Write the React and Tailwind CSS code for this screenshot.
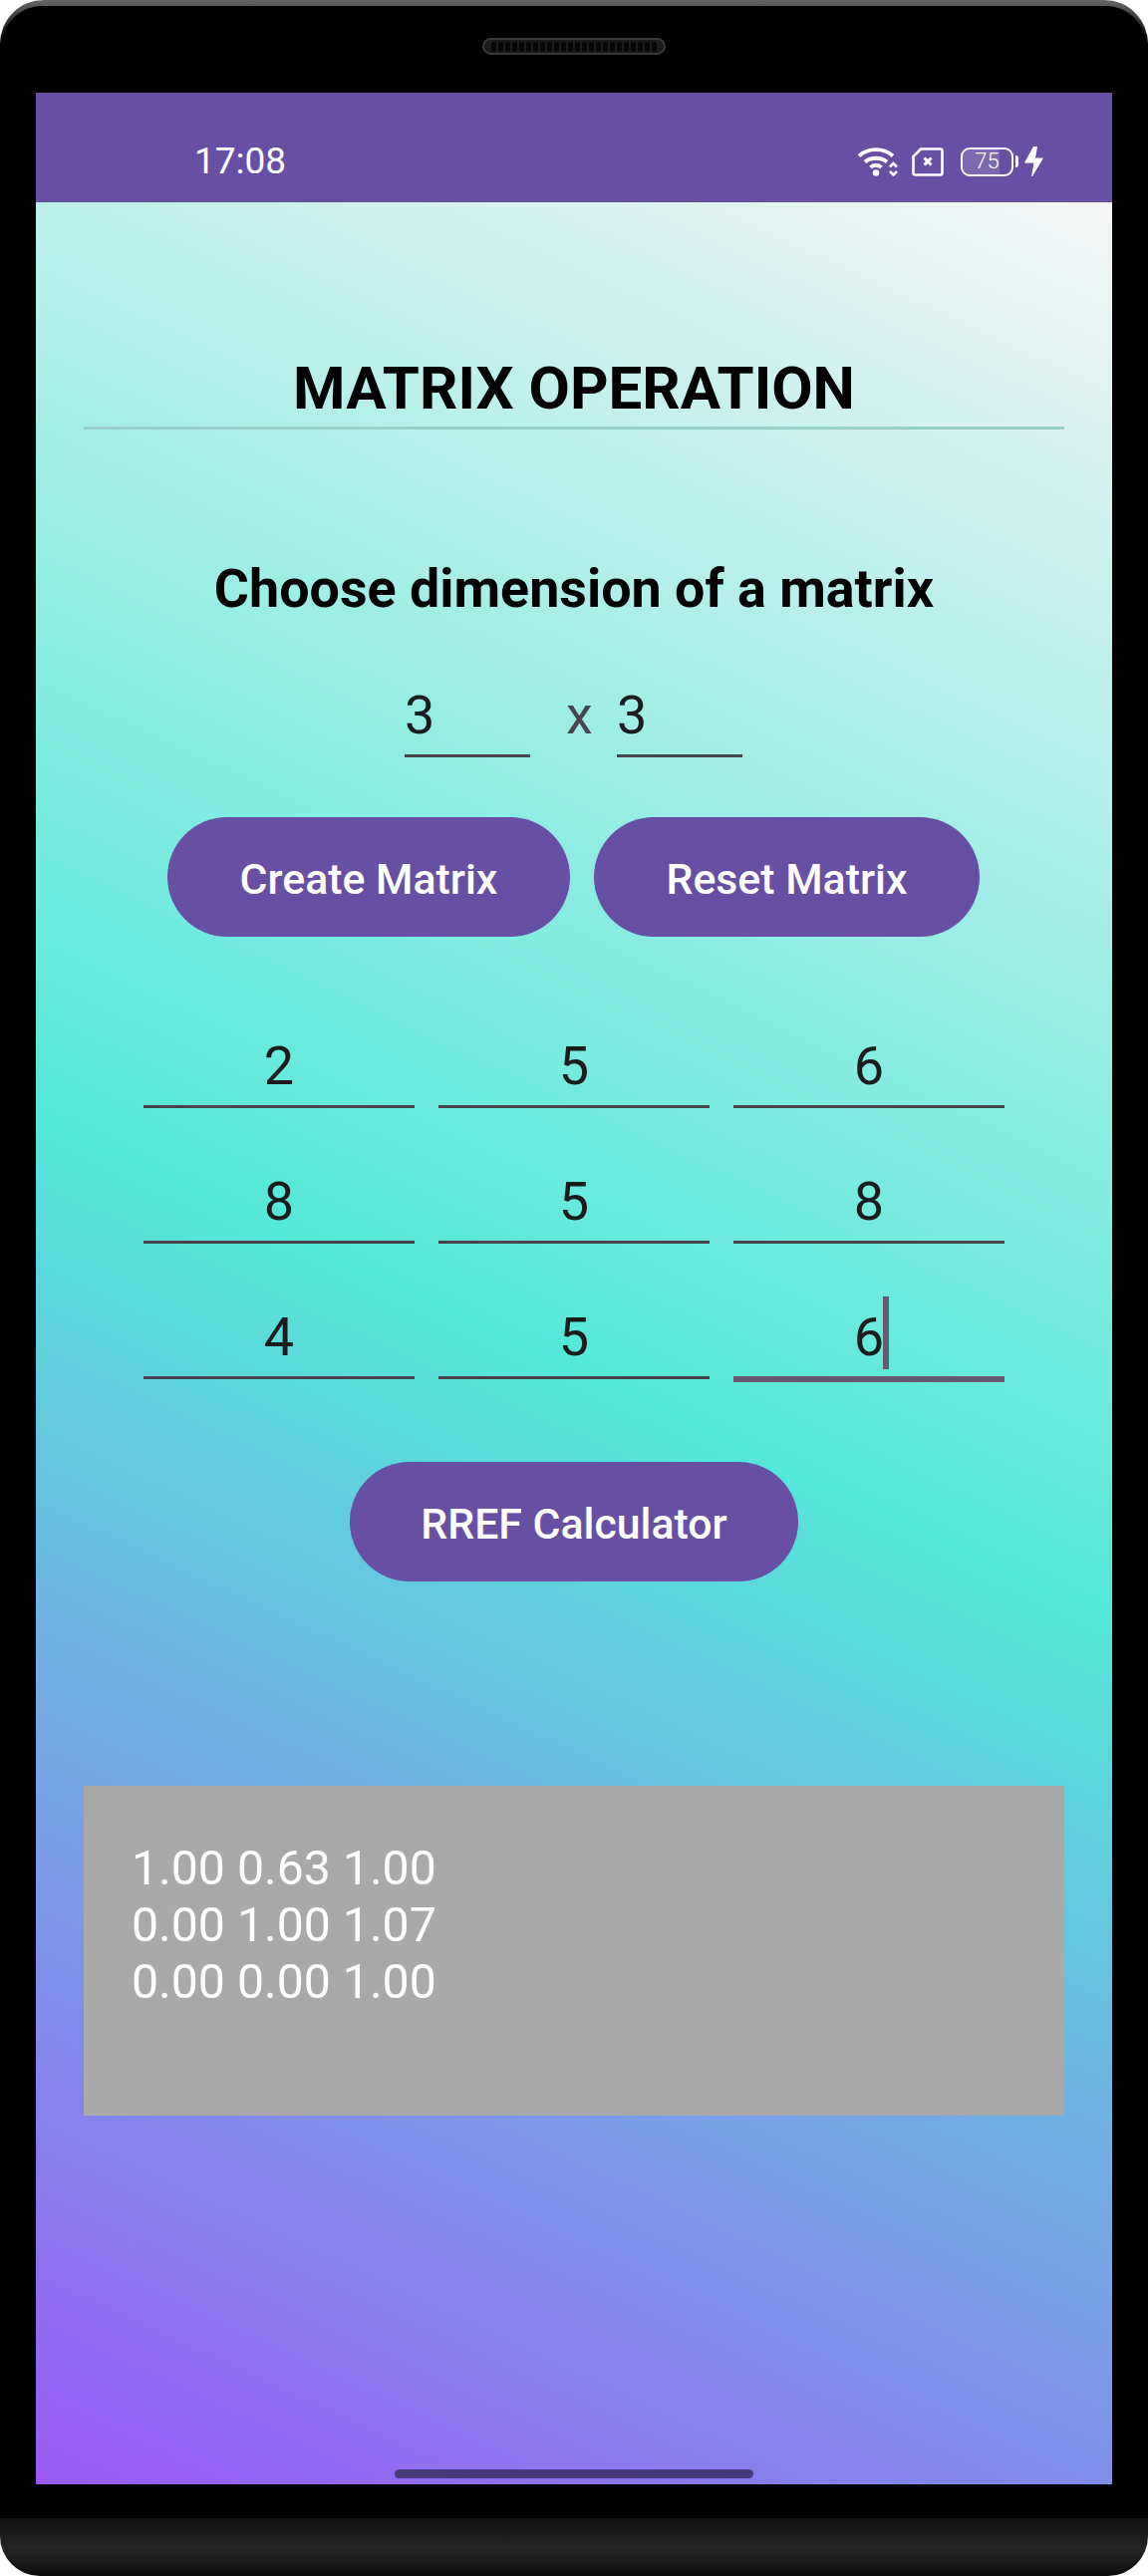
import React from 'react';

const font = { fontFamily: 'Roboto, sans-serif' };

const matrix = [
  ['2', '5', '6'],
  ['8', '5', '8'],
  ['4', '5', '6'],
];

const rref = ['1.00 0.63 1.00', '0.00 1.00 1.07', '0.00 0.00 1.00'];

const Speaker = () => (
  <div className="flex h-[17px] w-[184px] items-center justify-center gap-[2px] rounded-full border-2 border-[#3a3a3a] bg-[#1b1b1b]">
    {Array.from({ length: 24 }).map((_, i) => (
      <span key={i} className="h-[10px] w-[5px] rounded-full bg-[#050505]" />
    ))}
  </div>
);

const StatusIcons = () => (
  <div className="flex items-center">
    {/* wifi with up/down arrows */}
    <svg width="40" height="30" viewBox="0 0 40 30" fill="none" className="text-white">
      <path d="M1 9.500C10 1 26 1 35 9.500" stroke="currentColor" strokeWidth="3.8" />
      <path d="M7 15.500C12.500 10.500 23.500 10.500 29 15.500" stroke="currentColor" strokeWidth="3.8" />
      <path d="M12.500 21C15.500 18 20.500 18 23.500 21" stroke="currentColor" strokeWidth="3.8" />
      <circle cx="18" cy="26.500" r="3.200" fill="currentColor" />
      <path d="M32 20.500l3.500-3.500 3.500 3.500M32 25l3.500 3.500 3.500-3.500" stroke="currentColor" strokeWidth="2.600" />
    </svg>
    {/* sim card, no service */}
    <svg width="32" height="29" viewBox="0 0 32 29" fill="none" className="ml-[14px]">
      <path d="M9 1.500H28.500a2 2 0 0 1 2 2V25.500a2 2 0 0 1-2 2H3.500a2 2 0 0 1-2-2V9z" stroke="white" strokeWidth="2.600" />
      <path d="M12.500 10.500l7 7M19.500 10.500l-7 7" stroke="white" strokeWidth="3" />
    </svg>
    {/* battery */}
    <div className="relative ml-[17px] flex h-[29px] w-[53px] items-center justify-center overflow-hidden rounded-[9px] border-[2.5px] border-white">
      <div className="absolute inset-y-0 left-0 w-[37px] bg-white/15" />
      <span className="relative text-[22px] font-light leading-none text-white" style={font}>75</span>
    </div>
    <div className="ml-[2px] h-[12px] w-[3px] rounded-r-sm bg-white" />
    {/* charging bolt */}
    <svg width="19" height="30" viewBox="0 0 19 30" className="ml-[6px]">
      <path d="M9 0H13L11 11.500H19L8 30H7L9.500 16.500H0z" fill="white" />
    </svg>
  </div>
);

const PillButton = ({ className, children }) => (
  <button
    className={`flex h-[120px] items-center justify-center rounded-full bg-[#674fa3] pt-[4px] text-[42.800px] font-medium text-white ${className}`}
  >
    {children}
  </button>
);

const DimInput = ({ value }) => (
  <div className="h-[80px] w-[126px] border-b-[3px] border-[#47444d] text-[54px] leading-[75px] text-[#1c1b1f]">
    {value}
  </div>
);

const Cell = ({ value, focused }) => (
  <div
    className={`flex w-[272px] items-center justify-center pb-[3px] text-[54px] text-[#1c1b1f] ${
      focused ? 'h-[83px] border-b-[6px] border-[#655a70]' : 'h-[80px] border-b-[3px] border-[#47444d]'
    }`}
  >
    <span className="relative">
      {value}
      {focused && <span className="absolute top-0 left-[calc(100%-1px)] h-[73px] w-[6px] bg-[#655a70]" />}
    </span>
  </div>
);

const App = () => {
  return (
    <div className="h-[2585px] w-[1152px] overflow-hidden bg-white" style={font}>
      {/* top bezel */}
      <div className="h-[93px] rounded-t-[44px] bg-[linear-gradient(#666666,#000000_42px)] px-[2px] pt-[6px]">
        <div className="flex h-[87px] justify-center rounded-t-[40px] bg-black pt-[32px]">
          <Speaker />
        </div>
      </div>

      <div className="bg-black px-[36px] pb-[34px]">
        {/* screen */}
        <div className="flex h-[2400px] flex-col">
          <div className="flex h-[110px] items-center justify-between bg-[#674fa3] pl-[159px] pr-[69px] pt-[28px]">
            <span className="text-[37px] text-white">17:08</span>
            <StatusIcons />
          </div>

          <div className="relative flex flex-1 flex-col items-center bg-[linear-gradient(25deg,#9a5af5_0%,#54e8d8_49.200%,#f5f5f5_100%)] px-[48px]">
            <h1 className="mt-[154px] w-full border-b-[3px] border-[#98cfc7] pb-[5px] text-center text-[60px] font-bold leading-[66px] text-black">
              MATRIX OPERATION
            </h1>
            <h2 className="mt-[130px] text-[53.800px] font-bold leading-[60px] text-black">
              Choose dimension of a matrix
            </h2>

            <div className="mr-[1px] mt-[59px] flex items-start">
              <DimInput value="3" />
              <span className="ml-[36px] mr-[24px] text-[54px] leading-[75px] text-[#49454f]">x</span>
              <DimInput value="3" />
            </div>

            <div className="mr-[1px] mt-[60px] flex gap-[24px]">
              <PillButton className="w-[404px]">Create Matrix</PillButton>
              <PillButton className="w-[387px]">Reset Matrix</PillButton>
            </div>

            <div className="mt-[92px] flex flex-col gap-[56px]">
              {matrix.map((row, r) => (
                <div key={r} className="flex items-start gap-[24px]">
                  {row.map((v, c) => (
                    <Cell key={c} value={v} focused={r === 2 && c === 2} />
                  ))}
                </div>
              ))}
            </div>

            <PillButton className="mt-[80px] w-[450px]">RREF Calculator</PillButton>

            <div className="mt-[205px] h-[331px] w-full bg-[#a9a9a9] pl-[48px] pt-[54px] text-[48.200px] leading-[57px] text-white">
              {rref.map((line) => (
                <div key={line}>{line}</div>
              ))}
            </div>

            {/* home indicator */}
            <div className="absolute bottom-[6px] left-[360px] h-[9px] w-[360px] rounded-full bg-[#473a7c]" />
          </div>
        </div>
      </div>

      {/* bottom chin */}
      <div className="h-[58px] rounded-b-[40px] bg-[linear-gradient(#0f0f0f,#262626_52%,#0c0c0c)]" />
    </div>
  );
};

export default App;
